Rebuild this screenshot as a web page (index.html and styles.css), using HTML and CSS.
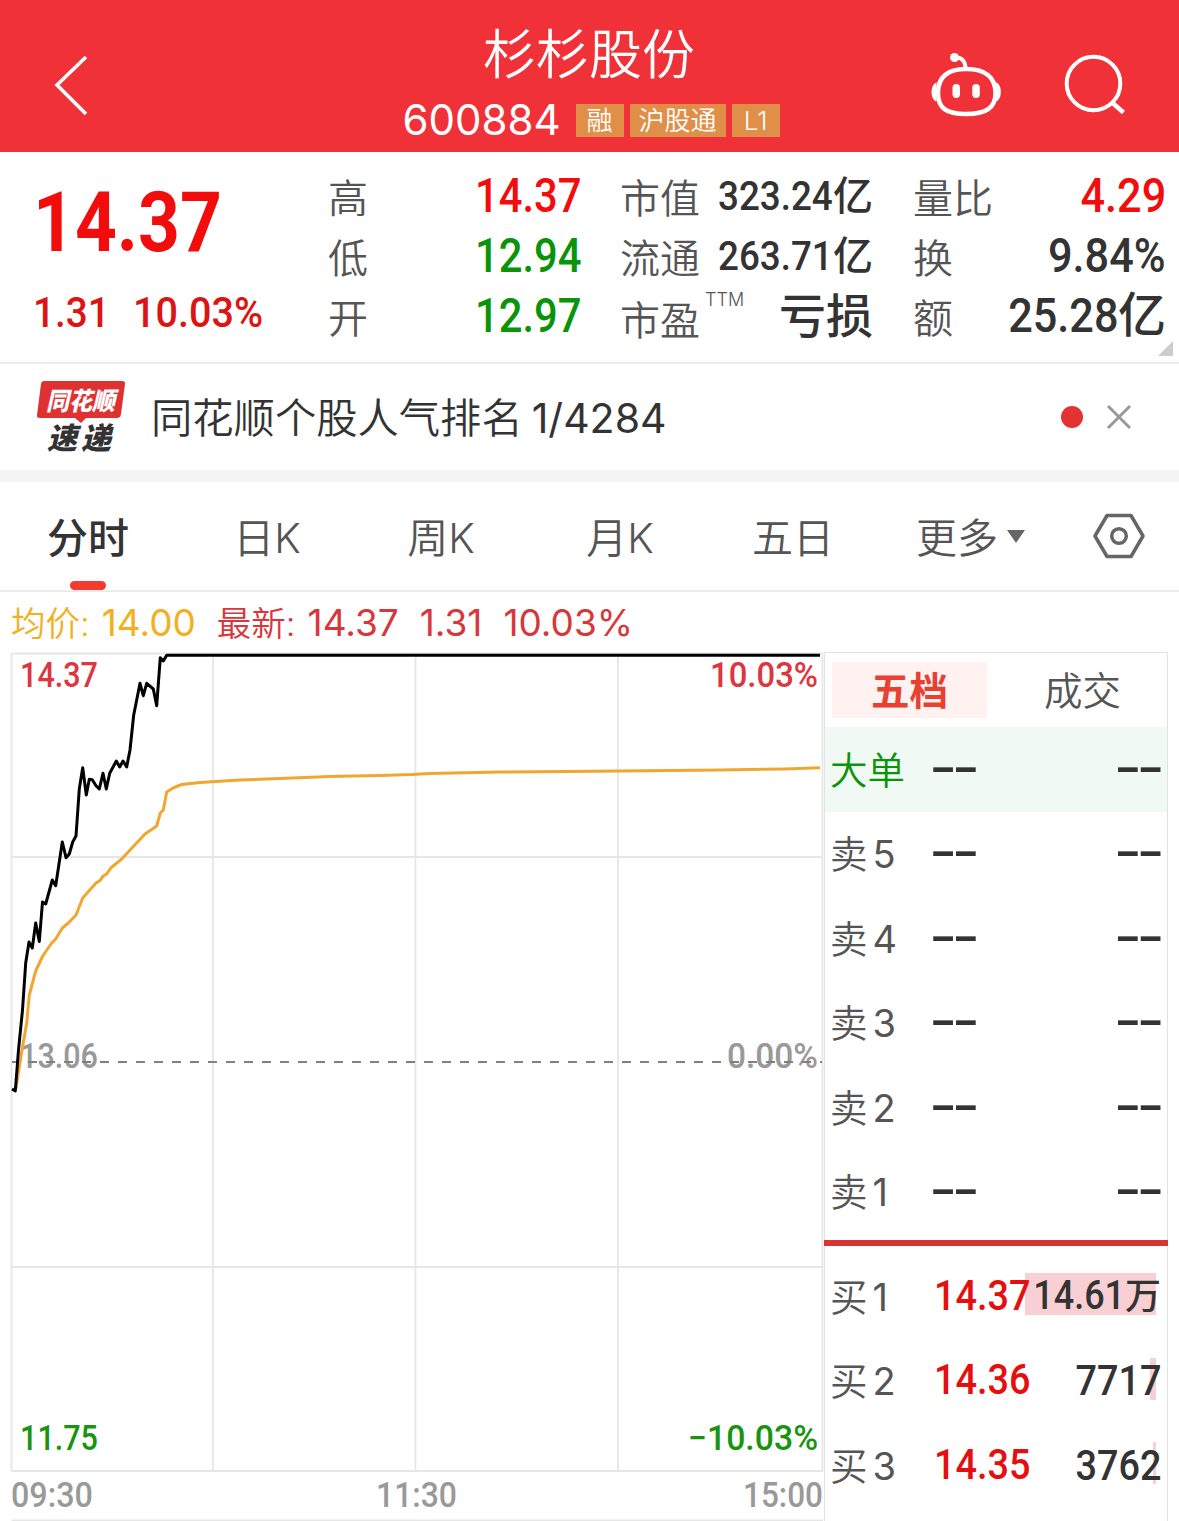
FILE: index.html
```
<!DOCTYPE html>
<html lang="zh-CN">

<head>
    <meta charset="UTF-8">
    <meta name="viewport" content="width=device-width, initial-scale=1.0">
    <title>杉杉股份 600884</title>
    <link rel="stylesheet" href="styles.css">
</head>

<body>
    <div id="container">
        <div class="header">
            <svg class="back" width="40" height="66" viewBox="0 0 40 66">
                <path d="M35 5L6 33L35 62" fill="none" stroke="#fff" stroke-width="3.6" />
            </svg>
            <div class="title">
                <h1>杉杉股份</h1>
                <div class="code">
                    <span class="code-num">600884</span>
                    <span class="tag tag-s">融</span>
                    <span class="tag tag-l">沪股通</span>
                    <span class="tag tag-s">L1</span>
                </div>
            </div>
            <div class="tools">
                <svg width="72" height="66" viewBox="930 52 72 66">
                    <path d="M966 69C985 69 995.500 77 995.500 93C995.500 108 986 114 966 114C946 114 938 108 938 93C938 77 947 69 966 69Z" fill="none" stroke="#fff" stroke-width="4.500" />
                    <path d="M936.500 82.500C930 84 930 100 936.500 101.500ZM996 82.500C1002.500 84 1002.500 100 996 101.500Z" fill="#fff" />
                    <circle cx="954.500" cy="57.500" r="4.500" fill="#fff" />
                    <path d="M954.500 57.500C962 57 965.500 61 965.500 69" fill="none" stroke="#fff" stroke-width="4" />
                    <rect x="952.500" y="84" width="7.500" height="14" rx="3.700" fill="#fff" />
                    <rect x="972.300" y="84" width="7.500" height="14" rx="3.700" fill="#fff" />
                </svg>
                <svg width="64" height="66" viewBox="1063 52 64 66">
                    <circle cx="1093.500" cy="83.500" r="26.800" fill="none" stroke="#fff" stroke-width="4" />
                    <path d="M1112 102.500L1123.500 112.500" stroke="#fff" stroke-width="4.500" />
                </svg>
            </div>
        </div>

        <div class="quote">
            <div class="price">
                <div class="now"><span class="num">14.37</span></div>
                <div class="change"><span class="num diff">1.31</span><span class="num rate">10.03%</span></div>
            </div>
            <dl class="c1">
                <dt>高</dt><dd class="red"><span class="num">14.37</span></dd>
                <dt>低</dt><dd class="green"><span class="num">12.94</span></dd>
                <dt>开</dt><dd class="green"><span class="num">12.97</span></dd>
            </dl>
            <dl class="c2">
                <dt>市值</dt><dd><span class="num">323.24</span><i>亿</i></dd>
                <dt>流通</dt><dd><span class="num">263.71</span><i>亿</i></dd>
                <dt class="pe">市盈<sup>TTM</sup></dt><dd class="loss"><i>亏损</i></dd>
            </dl>
            <dl class="c3">
                <dt>量比</dt><dd class="red"><span class="num">4.29</span></dd>
                <dt>换</dt><dd><span class="num">9.84%</span></dd>
                <dt>额</dt><dd><span class="num">25.28</span><i>亿</i></dd>
            </dl>
            <span class="corner"></span>
        </div>

        <div class="notice">
            <svg class="logo" width="92" height="78" viewBox="35 377 92 78">
                <path d="M44 380H122Q125.500 380 125 383L121 413Q120.500 417 117 417H86L81 422L75 417H40Q36.500 417 37 414L41 383Q41.500 380 44 380Z" fill="#e03132" />
                <text class="logo-top" x="46" y="408.500" textLength="69" lengthAdjust="spacingAndGlyphs">同花顺</text>
                <text class="logo-btm" x="47" y="447.500" textLength="64">速递</text>
            </svg>
            <p>同花顺个股人气排名<span>1/4284</span></p>
            <span class="dot"></span>
            <svg class="close" width="26" height="26" viewBox="0 0 26 26">
                <path d="M2 2L24 24M24 2L2 24" stroke="#999" stroke-width="3" />
            </svg>
        </div>

        <div class="tabs">
            <a class="on">分时</a>
            <a>日K</a>
            <a>周K</a>
            <a>月K</a>
            <a>五日</a>
            <a class="more">更多<span class="arrow"></span></a>
            <svg width="54" height="48" viewBox="0 0 54 48">
                <path d="M15 3.500H39L51 24L39 44.500H15L3 24Z" fill="none" stroke="#666" stroke-width="3.500" stroke-linejoin="round" />
                <circle cx="27" cy="24" r="7.300" fill="none" stroke="#666" stroke-width="3.500" />
            </svg>
        </div>

        <div class="legend">
            <span class="avg">均价:<b>14.00</b></span>
            <span class="last">最新:<b>14.37</b></span>
            <b>1.31</b>
            <b>10.03%</b>
        </div>

        <div class="main">
            <svg class="chart" width="824" height="869" viewBox="0 652 824 869">
                <g class="grid">
                    <path d="M11.500 653.500H823M11.500 857H823M11.500 1267H823M11.500 1471H823M11.500 1520.500H823" />
                    <path d="M11.500 653V1471M213 653V1471M415.500 653V1471M618 653V1471M822.500 653V1471" />
                </g>
                <g class="label">
                    <text class="gray" x="20" y="1068" textLength="78" lengthAdjust="spacingAndGlyphs">13.06</text>
                    <text class="gray" x="727" y="1068" textLength="91" lengthAdjust="spacingAndGlyphs">0.00%</text>
                </g>
                <path class="zero" d="M12 1062H822" />
                <polyline class="avg-line" points="14,1089 16,1088 22,1050 26.700,1023 29.300,995 35.700,971 42.700,956 51.700,943 55.700,939 62.300,928 68.300,923 76,915 82.700,898 96,883 100,880.500 103.300,876 106.700,874 110.700,868 121.700,859 145,834 156.700,826 160.300,813 163.300,810 166.700,792 173,788 181.700,784.500 200,782.500 240,780 330,776.500 380,775.500 412,774.500 430,773.500 500,772 620,771 720,770 785,769 820,767.700" />
                <polyline class="price-line" points="12,1089 15.300,1091 18.500,1050 22.500,1010 25.700,963 29,942 32.300,948 35.700,923 39.300,941.500 42.500,902 45.700,904 52.300,880 55.700,885.700 62.300,842 66,857.700 69.300,854 72.700,842 76,836 79.300,789 82.700,767.700 86.300,795 89.300,779.300 92.300,779.700 96,785.700 99.300,789 103,773.300 106.300,789 109.700,773.300 116.300,761 119.700,767 123,761 126.700,767 130,750 133.700,715 136.700,700 140,683.300 143.300,695.700 146.700,683.300 153.300,689 156.700,705.700 160.300,657.700 163.300,661 166.700,655.300 820,655.300" />
                <g class="label">
                    <text class="up" x="20" y="687" textLength="78" lengthAdjust="spacingAndGlyphs">14.37</text>
                    <text class="up" x="710" y="687" textLength="108" lengthAdjust="spacingAndGlyphs">10.03%</text>
                    <text class="down" x="20" y="1450" textLength="78" lengthAdjust="spacingAndGlyphs">11.75</text>
                    <text class="down" x="688" y="1450" textLength="130" lengthAdjust="spacingAndGlyphs">−10.03%</text>
                    <text class="gray" x="11" y="1507" textLength="82" lengthAdjust="spacingAndGlyphs">09:30</text>
                    <text class="gray" x="376" y="1507" textLength="81" lengthAdjust="spacingAndGlyphs">11:30</text>
                    <text class="gray" x="743" y="1507" textLength="80" lengthAdjust="spacingAndGlyphs">15:00</text>
                </g>
            </svg>

            <div class="book">
                <div class="book-tabs">
                    <span class="on">五档</span>
                    <span>成交</span>
                </div>
                <div class="row big"><span class="name">大单</span><span class="none">--</span><span class="none vol">--</span></div>
                <div class="row"><span class="name">卖<b>5</b></span><span class="none">--</span><span class="none vol">--</span></div>
                <div class="row"><span class="name">卖<b>4</b></span><span class="none">--</span><span class="none vol">--</span></div>
                <div class="row"><span class="name">卖<b>3</b></span><span class="none">--</span><span class="none vol">--</span></div>
                <div class="row"><span class="name">卖<b>2</b></span><span class="none">--</span><span class="none vol">--</span></div>
                <div class="row"><span class="name">卖<b>1</b></span><span class="none">--</span><span class="none vol">--</span></div>
                <div class="line"></div>
                <div class="row"><span class="bar" style="width:131px"></span><span class="name">买<b>1</b></span><span class="num">14.37</span><span class="vol wan"><span class="num">14.61</span><i>万</i></span></div>
                <div class="row"><span class="bar" style="width:6px"></span><span class="name">买<b>2</b></span><span class="num">14.36</span><span class="vol"><span class="num">7717</span></span></div>
                <div class="row"><span class="bar" style="width:3px"></span><span class="name">买<b>3</b></span><span class="num">14.35</span><span class="vol"><span class="num">3762</span></span></div>
            </div>
        </div>
    </div>
</body>

</html>
```
FILE: styles.css
```
* {
    margin: 0;
    padding: 0;
    box-sizing: border-box;
}

body {
    background: #fff;
    font-family: Inter, "Noto Sans CJK SC", sans-serif;
    color: #333;
}

i {
    font-style: normal;
}

b {
    font-weight: 400;
}

svg {
    display: block;
    overflow: visible;
}

#container {
    width: 1179px;
    height: 1521px;
    overflow: hidden;
}

/* 数字用窄体 */
.num {
    display: inline-block;
    font-family: Roboto, sans-serif;
    font-weight: 500;
    transform: scaleX(.9);
    transform-origin: right;
}

.red {
    color: #f20c0c;
}

.green {
    color: #0a940a;
}

/* 头部 */
.header {
    display: grid;
    grid-template-columns: 300px 1fr 300px;
    height: 152px;
    background: #f03138;
    color: #fff;
}

.back {
    margin: 52px 0 0 51px;
}

.title {
    padding-top: 19px;
}

.title h1 {
    margin-right: 1px;
    text-align: center;
    font-size: 53px;
    font-weight: 350;
    line-height: 72px;
}

.code {
    display: flex;
    align-items: center;
    justify-content: center;
    gap: 6px;
    height: 58px;
    padding-left: 3px;
}

.code-num {
    margin-right: 9px;
    font-size: 42px;
    font-weight: 400;
    line-height: 58px;
    padding-bottom: 1px;
}

.tag {
    height: 33px;
    background: #e08f49;
    text-align: center;
    font-size: 26px;
    font-weight: 350;
    line-height: 33px;
}

.tag-s {
    width: 48px;
}

.tag-l {
    width: 96px;
}

.tools {
    display: flex;
    justify-content: space-between;
    padding: 52px 52px 0 51px;
}

/* 行情 */
.quote {
    position: relative;
    display: flex;
    height: 212px;
    padding-top: 15px;
    border-bottom: 2px solid #ebebeb;
}

.price {
    width: 328px;
    padding-left: 33px;
    color: #f20c0c;
}

.price .num {
    transform-origin: left;
}

.now {
    height: 110px;
    font-size: 84px;
    line-height: 107px;
}

.now .num {
    font-weight: 700;
    transform: scaleX(.87);
}

.change {
    display: flex;
    font-size: 43px;
    line-height: 70px;
    color: #dc1414;
}

.diff {
    width: 100px;
}

.change .rate {
    transform: scaleX(.92);
}

.quote dl {
    display: grid;
    grid-template-columns: auto 1fr;
    grid-auto-rows: 60px;
    align-content: start;
    line-height: 60px;
}

.quote dt {
    padding-top: 2px;
    font-size: 40px;
    font-weight: 350;
    color: #555;
    white-space: nowrap;
}

.quote dd {
    margin-top: -2px;
    text-align: right;
    font-size: 48px;
    font-weight: 500;
    white-space: nowrap;
}

.c1 {
    width: 253px;
}

.c1 .num {
    transform: scaleX(.87);
}

.c2 {
    width: 253px;
    margin-left: 39px;
}

.quote .c2 dd {
    margin-top: -1px;
    font-size: 40px;
}

.c2 .num {
    transform: scaleX(.92);
}

.quote .c2 .loss {
    margin-top: -1px;
    font-size: 47px;
}

.c3 {
    width: 253px;
    margin-left: 40px;
}

.quote .pe {
    width: 80px;
    padding-top: 4px;
}

.pe sup {
    margin-left: 5px;
    font-size: 18px;
    line-height: 0;
    vertical-align: 29px;
}

.corner {
    position: absolute;
    right: 6px;
    bottom: 6px;
    border-left: 15px solid transparent;
    border-bottom: 15px solid #ccc;
}

/* 速递 */
.notice {
    display: flex;
    align-items: center;
    height: 118px;
    padding: 0 47px 0 35px;
    border-bottom: 12px solid #f4f4f4;
}

.notice p {
    flex: 1;
    margin-left: 24px;
    padding-bottom: 5px;
    font-size: 41.300px;
    font-weight: 350;
}

.notice p span {
    margin-left: 9px;
    font-size: 41px;
    font-weight: 400;
}

.logo text {
    font-family: "Noto Sans CJK SC", sans-serif;
    font-weight: 900;
    font-style: italic;
}

.logo-top {
    font-size: 25px;
    fill: #fff;
}

.logo-btm {
    font-size: 30px;
    fill: #333;
}

.dot {
    width: 22px;
    height: 22px;
    margin-right: 23px;
    border-radius: 50%;
    background: #e43131;
}

/* 周期切换 */
.tabs {
    display: grid;
    grid-template-columns: 176px 182px 166px 192px 154px 222px 54px;
    align-items: center;
    height: 110px;
    border-bottom: 2px solid #ebebeb;
}

.tabs a {
    position: relative;
    height: 108px;
    text-align: center;
    font-size: 41px;
    font-weight: 350;
    line-height: 112px;
    color: #555;
}

.tabs .on {
    font-weight: 500;
    color: #333;
}

.tabs .on::after {
    content: "";
    position: absolute;
    left: 70px;
    bottom: 0;
    width: 36px;
    height: 9px;
    border-radius: 5px;
    background: #f33b30;
}

.tabs .more {
    padding-left: 46px;
    text-align: left;
}

.arrow {
    display: inline-block;
    margin-left: 9px;
    vertical-align: 10px;
    border: 9px solid transparent;
    border-top: 13px solid #666;
    border-bottom: 0;
}

/* 均价 最新 */
.legend {
    display: flex;
    align-items: baseline;
    height: 60px;
    padding-left: 11px;
    font-size: 34.500px;
    font-weight: 350;
    line-height: 62px;
    color: #d9363b;
}

.legend > * {
    margin-right: 21px;
}

.legend b {
    font-size: 37px;
    font-weight: 400;
}

.legend span b {
    margin-left: 12px;
}

.legend .avg {
    color: #f2b01e;
}

/* 分时图 + 五档 */
.main {
    display: flex;
}

.grid {
    fill: none;
    stroke: #e6e6e6;
    stroke-width: 1.800;
}

.zero {
    stroke: #808080;
    stroke-width: 2;
    stroke-dasharray: 9 9;
    stroke-dashoffset: 2;
}

.avg-line,
.price-line {
    fill: none;
    stroke: #000;
    stroke-width: 3;
    stroke-linejoin: round;
}

.avg-line {
    stroke: #f0a732;
}

.label {
    font-family: Roboto, sans-serif;
    font-size: 35px;
    font-weight: 500;
}

.up {
    fill: #dc3640;
}

.down {
    fill: #189410;
}

.gray {
    fill: #999;
}

.book {
    width: 344px;
    height: 869px;
    border: 1px solid #e2e2e2;
    border-bottom: 0;
}

.book-tabs {
    display: flex;
    gap: 18px;
    height: 74px;
    padding: 9px 7px;
}

.book-tabs span {
    width: 155px;
    height: 56px;
    text-align: center;
    font-size: 38.500px;
    font-weight: 350;
    line-height: 58px;
    color: #555;
}

.book-tabs .on {
    background: #fff2f1;
    font-weight: 700;
    color: #e84132;
}

.row {
    position: relative;
    display: flex;
    align-items: center;
    height: 84.500px;
    padding: 0 6px 2px 5px;
    font-size: 42px;
}

.name {
    width: 104px;
    padding-bottom: 2px;
    font-size: 37.500px;
    font-weight: 350;
    color: #555;
}

.name b {
    margin-left: 5px;
    font-size: 38px;
    font-weight: 400;
}

.big {
    background: #f1f9f5;
}

.big .name {
    color: #0a940a;
}

.none {
    margin-left: -5px;
    padding-bottom: 3px;
    font-weight: 500;
    font-size: 50px;
    letter-spacing: -4.500px;
    color: #333;
    transform: scaleX(1.22);
    transform-origin: left;
}

.none.vol {
    right: 2px;
    transform-origin: right;
}

.row > .num {
    margin-right: -24px;
    color: #e60f0f;
    transform-origin: left;
}

.row .vol {
    position: relative;
    margin-left: auto;
    font-weight: 500;
    white-space: nowrap;
}

.vol i {
    font-size: 36px;
}

.wan {
    font-size: 40px;
    line-height: 50px;
}

.line {
    height: 6px;
    margin: 6px -1px 8px;
    background: #d93434;
}

.bar {
    position: absolute;
    top: 19px;
    right: 11px;
    height: 42px;
    background: #f8d0d3;
}
```
